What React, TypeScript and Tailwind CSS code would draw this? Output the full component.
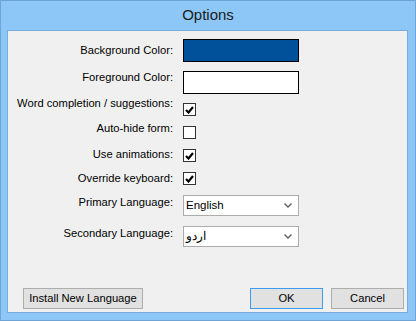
import React from "react";

const font = { fontFamily: '"Liberation Sans", Arial, sans-serif' };

const Check = ({ checked }: { checked: boolean }) => (
  <div className="w-[13px] h-[13px] border border-[#333] bg-white flex items-center justify-center">
    {checked && (
      <svg width="9" height="8" viewBox="0 0 9 8">
        <path d="M1 4 L3.5 6.5 L8 1" fill="none" stroke="#000" strokeWidth="2.2" />
      </svg>
    )}
  </div>
);

const Combo = ({ value, rtl }: { value: string; rtl?: boolean }) => (
  <div className="w-[116px] h-[21px] border border-[#acacac] bg-white flex items-center justify-between pl-[2px] pr-[6px]">
    <span className="text-[11.5px] text-black leading-none" dir={rtl ? "rtl" : undefined}>
      {value}
    </span>
    <svg width="8" height="5" viewBox="0 0 8 5">
      <path d="M0.5 0.5 L4 4 L7.5 0.5" fill="none" stroke="#606060" strokeWidth="1.4" />
    </svg>
  </div>
);

// lift = margin under the label, moves it up by half
const Row = ({ label, mt, h, lift = "", children }: { label: string; mt: string; h: string; lift?: string; children: React.ReactNode }) => (
  <div className={`flex items-center ${mt} ${h}`}>
    <div className={`w-[165px] text-right text-[11.2px] text-black leading-none whitespace-nowrap ${lift}`}>{label}</div>
    <div className="ml-[10px]">{children}</div>
  </div>
);

export default function App() {
  return (
    <div style={font} className="w-[416px] h-[321px] bg-[#8cc7f7] border border-[#6fa5d6] flex flex-col">
      {/* title */}
      <div className="h-[29px] flex items-center justify-center text-[15px] text-[#1b1b1b]">Options</div>

      {/* client area */}
      <div className="ml-[6px] mr-[7px] h-[283px] bg-[#f0f0f0] border border-[#79acdd] flex flex-col">
        <div className="flex flex-col">
          <Row label="Background Color:" mt="mt-[8px]" h="h-[23px]">
            <div className="w-[116px] h-[23px] bg-[#00519a] border border-black" />
          </Row>
          <Row label="Foreground Color:" mt="mt-[9px]" h="h-[23px]" lift="mb-[10px]">
            <div className="w-[116px] h-[23px] bg-white border border-black" />
          </Row>
          <Row label="Word completion / suggestions:" mt="mt-[9px]" h="h-[13px]" lift="mb-[12px]">
            <Check checked />
          </Row>
          <Row label="Auto-hide form:" mt="mt-[10px]" h="h-[13px]" lift="mb-[7px]">
            <Check checked={false} />
          </Row>
          <Row label="Use animations:" mt="mt-[10px]" h="h-[13px]" lift="mb-[2px]">
            <Check checked />
          </Row>
          <Row label="Override keyboard:" mt="mt-[10px]" h="h-[13px]">
            <Check checked />
          </Row>
          <Row label="Primary Language:" mt="mt-[10px]" h="h-[21px]" lift="mb-[6px]">
            <Combo value="English" />
          </Row>
          <Row label="Secondary Language:" mt="mt-[10px]" h="h-[21px]" lift="mb-[6px]">
            <Combo value="اردو" rtl />
          </Row>
        </div>

        {/* buttons */}
        <div className="mt-auto mb-[3px] flex items-center pl-[15px] pr-[3px]">
          <button className="w-[120px] h-[21px] bg-[#e1e1e1] border border-[#adadad] text-[11.2px] text-black leading-none whitespace-nowrap">
            Install New Language
          </button>
          <button className="ml-auto w-[73px] h-[21px] bg-[#e1e1e1] border border-[#3c9cf0] text-[11.2px] text-black leading-none">
            OK
          </button>
          <button className="ml-[8px] w-[73px] h-[21px] bg-[#e1e1e1] border border-[#adadad] text-[11.2px] text-black leading-none">
            Cancel
          </button>
        </div>
      </div>
    </div>
  );
}
